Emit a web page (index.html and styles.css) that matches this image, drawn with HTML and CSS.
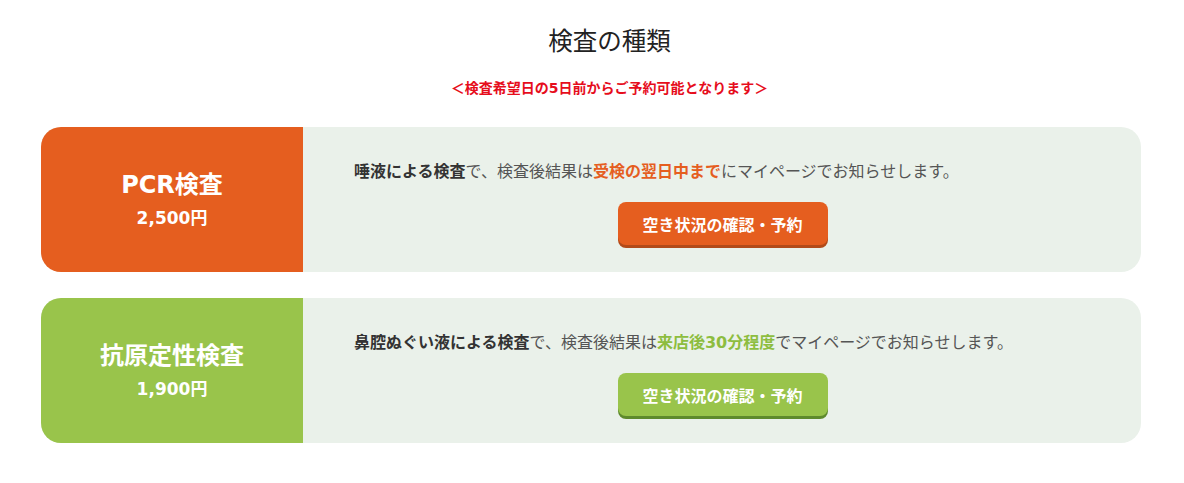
FILE: index.html
```html
<!DOCTYPE html>
<html lang="ja">
<head>
<meta charset="utf-8">
<title>検査の種類</title>
<link rel="stylesheet" href="styles.css">
</head>
<body>
<section class="types">
  <header class="types-header">
    <h2 class="types-title">検査の種類</h2>
    <p class="types-note">＜検査希望日の5日前からご予約可能となります＞</p>
  </header>

  <div class="card card-pcr">
    <div class="card-head">
      <div class="card-name">PCR検査</div>
      <div class="card-price">2,500円</div>
    </div>
    <div class="card-body">
      <p class="card-text"><strong>唾液による検査</strong>で、検査後結果は<em class="hl">受検の翌日中まで</em>にマイページでお知らせします。</p>
      <div class="btn-wrap"><a class="btn" href="#">空き状況の確認・予約</a></div>
    </div>
  </div>

  <div class="card card-antigen">
    <div class="card-head">
      <div class="card-name">抗原定性検査</div>
      <div class="card-price">1,900円</div>
    </div>
    <div class="card-body">
      <p class="card-text"><strong>鼻腔ぬぐい液による検査</strong>で、検査後結果は<em class="hl">来店後30分程度</em>でマイページでお知らせします。</p>
      <div class="btn-wrap"><a class="btn" href="#">空き状況の確認・予約</a></div>
    </div>
  </div>
</section>
</body>
</html>
```

FILE: styles.css
```css
* { box-sizing: border-box; }
html, body { margin: 0; padding: 0; background: #fff; }
body {
  font-family: "DejaVu Sans", "Noto Sans CJK JP", sans-serif;
  color: #555;
}
.types {
  width: 1100px;
  margin: 0 0 0 41px;
  padding-top: 22px;
}
.types-header {
  padding-left: 37px;
}
.types-title {
  margin: 0;
  text-align: center;
  font-family: "Noto Sans CJK JP", sans-serif;
  font-weight: 400;
  font-size: 24.5px;
  line-height: 36px;
  color: #222;
}
.types-note {
  margin: 20px 0 29px;
  text-align: center;
  font-size: 14px;
  line-height: 20px;
  font-weight: 700;
  color: #e60d1c;
}
.card {
  display: flex;
  height: 145px;
  border-radius: 20px;
  overflow: hidden;
  background: #eaf1ea;
  margin-bottom: 26px;
}
.card:last-child { margin-bottom: 0; }
.card-head {
  width: 262px;
  flex: none;
  display: flex;
  flex-direction: column;
  align-items: center;
  justify-content: center;
  color: #fff;
  font-weight: 700;
}
.card-pcr .card-head { background: #e55e1f; }
.card-antigen .card-head { background: #99c44b; }
.card-name {
  font-size: 24px;
  line-height: 32px;
}
.card-price {
  font-size: 17px;
  line-height: 24px;
  margin-top: 5px;
}
.card-body {
  flex: 1;
  padding: 33px 50px 0 51px;
}
.card-text {
  margin: 0;
  font-size: 16px;
  line-height: 24px;
  color: #555;
  white-space: nowrap;
}
.card-text strong { color: #333; font-weight: 700; }
.hl { font-style: normal; font-weight: 700; }
.card-pcr .hl { color: #e55e1f; }
.card-antigen .hl { color: #8dbd3f; }
.btn-wrap {
  display: flex;
  justify-content: center;
  margin-top: 18px;
}
.btn {
  display: flex;
  align-items: center;
  justify-content: center;
  width: 210px;
  height: 43px;
  border-radius: 8px;
  color: #fff;
  text-decoration: none;
  font-family: "Noto Sans CJK JP", sans-serif;
  font-weight: 700;
  font-size: 16px;
}
.card-pcr .btn { background: #e55e1f; box-shadow: 0 3px 0 #b24a19; }
.card-antigen .btn { background: #99c44b; box-shadow: 0 3px 0 #5e8a2c; }
```
